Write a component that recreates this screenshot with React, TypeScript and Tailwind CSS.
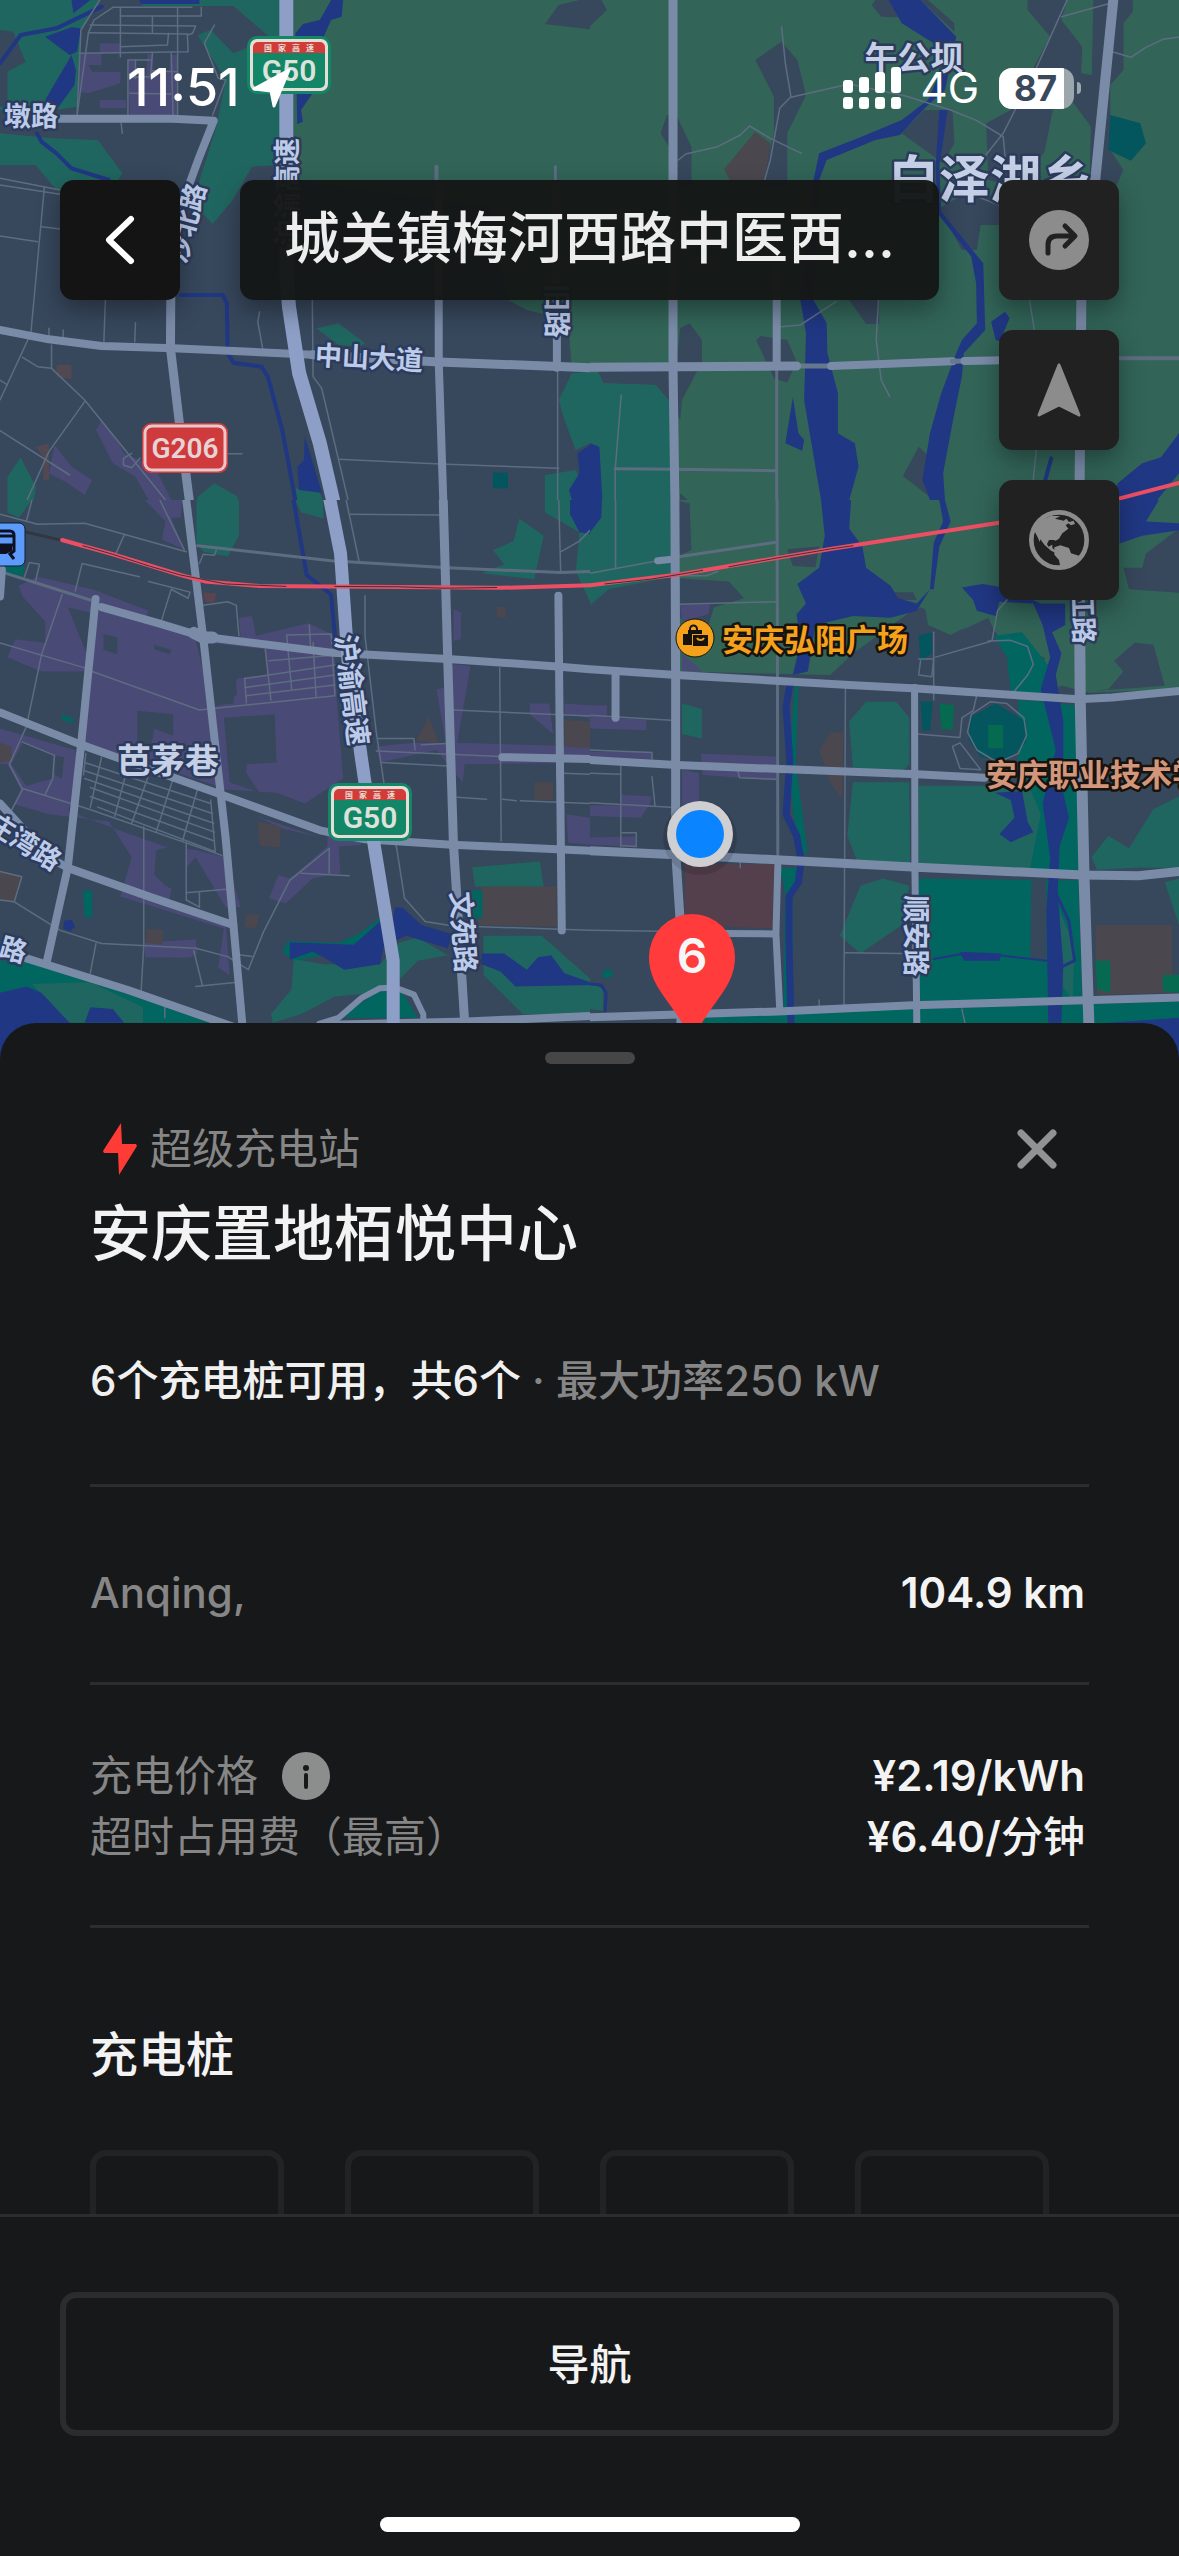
import React from "react";

type ShapeProps = { p: string; c: string };
type RoadProps = { p: string; w?: number; c?: string };

function Area({ p, c }: ShapeProps) {
  return <polygon points={p} fill={c} />;
}

function Road({ p, w = 1.5, c = "#5d6d81" }: RoadProps) {
  return (
    <polyline
      points={p}
      fill="none"
      stroke={c}
      strokeWidth={w}
      strokeLinecap="round"
      strokeLinejoin="round"
      vectorEffect="non-scaling-stroke"
    />
  );
}

const FIELD = "#326458";
const PARK = "#206660";
const TEAL = "#026660";
const POOL = "#03555e";
const WATER = "#203783";
const MALL = "#4a4a76";
const LAND = "#37475c";
const BROWN = "#4a474f";
const MAIN = "#7a8ba8";
const EXPRESS = "#8d9fc6";
const RAIL = "#ec4f64";

function TileNorthWest() {
  return (
    <svg x="0" y="0" width="590" height="500" viewBox="0 0 1568 1500" preserveAspectRatio="none">
      <Area c={LAND} p="0,0 1568,0 1568,1500 0,1500" />
      <Area c={FIELD} p="780,0 1568,0 1568,1115 1520,1115 1510,960 1400,930 1350,900 1300,620 780,540" />
      <Area c={LAND} p="1448,72 1485,15 1540,0 1568,0 1568,88" />
      <Area c={PARK} p="0,0 265,0 215,90 205,320 150,330 0,330" />
      <Area c={LAND} p="0,90 35,95 68,185 20,215 20,300 75,310 0,320" />
      <Area c={PARK} p="370,0 745,0 745,495 670,500 615,605 565,672 522,620 525,560 575,380 600,240 525,105 560,90 620,160 720,115 620,18 380,18" />
      <Area c={PARK} p="0,400 140,415 260,420 325,520 310,548 150,570 95,495 0,495" />
      <Area c={PARK} p="840,985 900,970 970,1030 955,1040 900,1035" />
      <Area c={PARK} p="1568,1115 1520,1120 1485,1200 1500,1260 1530,1350 1568,1330" />
      <Area c={PARK} p="1448,1425 1530,1410 1568,1500 1448,1500" />
      <Area c={PARK} p="20,1430 55,1372 95,1460 90,1500 20,1500" />
      <Area c={PARK} p="525,1490 570,1450 632,1490 632,1500 525,1500" />
      <Area c={PARK} p="785,1465 850,1478 858,1500 790,1500" />
      <Area c={POOL} p="1310,1418 1350,1418 1350,1465 1310,1465" />
      <Area c={WATER} p="190,0 240,0 195,40" />
      <Area c={WATER} p="370,0 530,0 530,12 375,12" />
      <Area c={WATER} p="120,110 190,82 215,85 205,155 185,165" />
      <Area c={WATER} p="190,165 202,210 198,255 150,330 120,300" />
      <Area c={WATER} p="880,0 912,0 908,50 880,60 860,110 870,140 855,240 800,330 805,365 790,372 785,100 805,72 850,60" />
      <Area c={WATER} p="810,1310 832,1390 855,1478 795,1470 790,1400 808,1380" />
      <Area c={WATER} p="1568,1335 1535,1360 1540,1420 1512,1470 1520,1500 1568,1500" />
      <Road c={WATER} w={4} p="0,190 55,105 150,85 270,20" />
      <Road c={WATER} w={4} p="98,400 110,425 150,460 190,505 290,540" />
      <Road c={WATER} w={4} p="480,885 592,885 603,910 605,1060 620,1088 695,1100 712,1130 750,1290 775,1440 785,1500" />
      <Area c={MALL} p="210,160 270,160 270,195 235,195 245,215 320,215 320,250 235,280 210,275" />
      <Area c={MALL} p="265,130 320,130 320,160 265,160" />
      <Area c={MALL} p="265,300 335,300 335,325 265,325" />
      <Area c={MALL} p="340,180 362,180 362,235 388,240 392,160 408,165 408,215 450,215 455,165 472,165 472,345 345,345" />
      <Area c={MALL} p="270,1262 300,1300 330,1360 380,1385 420,1420 455,1500 395,1500 360,1430 300,1390 255,1290" />
      <Area c={MALL} p="145,1335 190,1400 245,1440 225,1485 180,1450 130,1420" />
      <Area c="#524852" p="150,1095 190,1095 190,1138 150,1130" />
      <Area c="#524852" p="95,1340 130,1330 130,1440 115,1440 115,1370" />
      <Road p="510,22 300,22 250,60 235,98 205,345" />
      <Road p="265,0 215,90 205,345" />
      <Road p="320,22 320,170" />
      <Road p="535,22 535,48 320,48" />
      <Road p="240,75 520,78 512,100 498,105 500,155 210,160" />
      <Road p="235,98 498,102" />
      <Road p="405,50 405,98" />
      <Road p="472,22 472,345" />
      <Road p="320,140 445,135 448,100" />
      <Road p="340,345 340,180 400,180" />
      <Road p="360,180 360,235" />
      <Road p="405,160 400,230 345,232" />
      <Road p="405,212 470,215" />
      <Road p="455,160 460,345" />
      <Road p="345,280 455,282" />
      <Road p="570,75 543,130 580,235 600,240 565,345" />
      <Road p="322,370 325,400" />
      <Road p="0,535 160,570" />
      <Road p="0,555 160,583" />
      <Road p="118,560 100,780 82,1000 0,1200" />
      <Road p="110,680 160,687" />
      <Road p="0,708 100,725" />
      <Road p="280,900 276,1028" />
      <Road p="360,968 358,1025" />
      <Road p="130,985 130,1010" />
      <Road p="168,990 168,1012" />
      <Road p="137,1035 137,1105 225,1200 440,1500" />
      <Road p="60,1072 100,1100 137,1105" />
      <Road p="225,1205 130,1355 72,1500" />
      <Road p="0,1292 185,1425" />
      <Road p="0,1140 20,1155" />
      <Road p="372,1375 350,1403 328,1395 328,1375 350,1360" />
      <Road p="690,935 685,965 698,1045" />
      <Road p="605,1361 643,1361" />
      <Road p="830,900 832,1130 855,1165 925,1500" />
      <Road p="900,1378 1170,1392 1485,1405" />
      <Road p="1482,1110 1482,1500" />
      <Road p="1160,500 1160,560" w={4} />
      <Road p="1476,500 1476,560" w={3} />
      <Road c={MAIN} w={8} p="150,356 460,356 568,362 530,470 455,700" />
      <Road c={MAIN} w={8} p="0,990 130,1018 270,1038 460,1045 830,1064" />
      <Road c={MAIN} w={9} p="455,700 453,1045 480,1300 503,1500" />
      <Road c={MAIN} w={9} p="830,1064 1166,1086 1568,1103" />
      <Road c={MAIN} w={8} p="1166,560 1166,1086 1178,1500" />
      <Road c={MAIN} w={8} p="1480,560 1480,1103" />
      <Road c={EXPRESS} w={14} p="761,0 761,820 768,920 795,1120 850,1330 885,1500" />
    </svg>
  );
}

function TileNorthEast() {
  return (
    <svg x="590" y="0" width="589" height="500" viewBox="0 0 1568 1500" preserveAspectRatio="none">
      <Area c={FIELD} p="0,0 1568,0 1568,1500 0,1500" />
      <Area c={LAND} p="0,0 30,0 45,30 0,78" />
      <Area c={LAND} p="440,180 510,125 552,180 575,285 525,400 525,560 450,560 490,400 490,290" />
      <Area c={LAND} p="188,400 205,345 232,350 270,440 270,560 230,560 210,440" />
      <Area c={LAND} p="760,0 800,0 820,52 775,50 750,15" />
      <Area c={LAND} p="880,0 900,0 970,70 970,95" />
      <Area c={LAND} p="1165,0 1270,0 1255,60 1310,140 1308,220 1350,228 1350,405 1275,290 1232,330 1210,455 1140,560 1060,540 1055,370 1120,330 1225,110 1165,30" />
      <Area c={LAND} p="1340,0 1445,0 1445,35 1420,70 1420,210 1385,255 1385,450 1420,510 1400,560 1330,560" />
      <Area c={LAND} p="830,400 890,330 965,330 970,430 940,490" />
      <Area c={LAND} p="930,625 1030,560 1100,620 1100,675 1040,675 1030,750 990,750" />
      <Area c={LAND} p="690,900 770,900 770,972 735,972" />
      <Area c={LAND} p="442,1020 455,1008 525,1020 550,1085 525,1148 490,1135" />
      <Area c={LAND} p="240,985 265,970 298,1020 298,1085 245,1200 240,1260 215,1210 175,1155 35,1150 20,1110 230,1100" />
      <Area c={LAND} p="833,1428 875,1340 940,1410 940,1480 915,1500" />
      <Area c={LAND} p="240,1500 260,1500 240,1480" />
      <Area c={BROWN} p="357,508 440,395 480,430 465,545 375,545" />
      <Area c={POOL} p="1385,345 1465,370 1480,430 1440,482 1380,450" />
      <Area c={PARK} p="0,1120 22,1120 35,1150 175,1155 215,1210 215,1500 0,1500" />
      <Area c={WATER} p="795,0 830,70 915,130 945,180 900,300 830,360 720,412 610,460 595,540 560,900 575,1000 570,1200 615,1500 690,1500 715,1400 705,1330 660,1300 660,1180 632,1060 630,970 595,900 610,540 630,480 760,420 825,405 895,320 945,270 975,110 880,0" />
      <Area c={WATER} p="930,330 920,500 925,640 1015,770 1028,850 1030,970 990,1020 975,1060 935,1180 905,1300 885,1440 905,1500 945,1500 940,1420 970,1240 990,1130 995,1060 1052,990 1047,790 935,635 930,500 952,330" />
      <Area c={WATER} p="1068,965 1105,935 1117,955 1100,1000 1110,1030 1080,1020" />
      <Area c={WATER} p="540,1192 555,1300 570,1320 565,1352 520,1330" />
      <Area c={WATER} p="0,1330 25,1340 33,1500 0,1500" />
      <Area c={WATER} p="1405,1450 1470,1390 1520,1372 1568,1300 1568,1420 1510,1500 1390,1500" />
      <Road c={WATER} w={4} p="1228,1375 1212,1440" />
      <Road p="510,80 520,190 535,290 505,325 480,480 465,540" />
      <Road p="235,480 255,462 340,440 400,405 425,378 480,415 563,460" />
      <Road p="535,292 690,252 840,288 960,330 1030,362 1100,410 1105,470" />
      <Road p="1270,0 1190,200 1100,400 1050,470" />
      <Road p="1255,50 1385,10" />
      <Road p="1390,155 1440,172 1480,142 1525,118 1568,112" />
      <Road p="1030,590 1100,620" />
      <Road p="508,980 560,975 655,905" />
      <Road p="768,900 762,1020 775,1140 798,1190" />
      <Road p="497,1110 497,1500" w={3} />
      <Road p="83,1185 67,1410 67,1500" />
      <Road p="67,1406 222,1408 497,1412" w={3} />
      <Road p="1170,900 1183,990" />
      <Road p="1188,1350 1180,1440" />
      <Road p="1400,1075 1568,1075" w={4} />
      <Road c="#66788e" w={5} p="560,1098 640,1098" />
      <Road c={MAIN} w={9} p="0,1102 550,1098" />
      <Road c={MAIN} w={8} p="642,1098 965,1084" />
      <Road c="#66788e" w={5} p="965,1084 995,1083" />
      <Road c={MAIN} w={8} p="997,1083 1100,1081" />
      <Road c={MAIN} w={8} p="497,800 497,1098" />
      <Road c={MAIN} w={9} p="221,0 221,1100 226,1500" />
      <Road c={MAIN} w={10} p="1393,0 1345,540 1308,900 1303,1500" />
      <Road c={RAIL} w={4} p="1400,1498 1568,1449" />
    </svg>
  );
}

function TileSouthWest() {
  return (
    <svg x="0" y="500" width="590" height="560" viewBox="0 0 1568 1568" preserveAspectRatio="none">
      <Area c={LAND} p="0,0 1568,0 1568,1568 0,1568" />
      <Area c={PARK} p="20,0 85,0 50,50 20,35" />
      <Area c={PARK} p="522,0 635,0 635,100 605,158 540,145 522,120" />
      <Area c={PARK} p="785,0 858,0 860,52 800,35" />
      <Area c={PARK} p="1380,52 1445,100 1420,222 1280,205 1340,180 1310,140 1365,115" />
      <Area c={PARK} p="1448,0 1568,0 1568,285 1530,200 1540,90 1448,35" />
      <Area c={WATER} p="1515,0 1568,0 1568,95 1540,90 1515,40" />
      <Area c={TEAL} p="0,180 65,175 62,212 0,200" />
      <Area c={MALL} p="385,0 485,0 480,50 455,50 490,140 430,110 440,60" />
      <Area c={MALL} p="50,240 100,215 245,250 395,310 380,350 180,300 250,480 110,480 20,440 40,390 120,400 120,340 60,270" />
      <Area c={MALL} p="268,300 515,372 545,500 570,700 575,800 225,680 255,330" />
      <Area c={MALL} p="545,390 640,385 635,330 670,325 680,380 820,345 890,380 890,480 895,560 912,780 810,850 735,820 590,810 570,580 630,545 625,500" />
      <Area c={LAND} p="595,610 730,600 735,735 655,740 655,765 690,820 610,790" />
      <Area c={LAND} p="555,400 705,418 710,490 630,500 620,570 570,575" />
      <Area c={LAND} p="275,375 312,385 312,432 275,420" />
      <Area c={LAND} p="365,590 460,600 460,660 410,640 400,700 365,690" />
      <Area c={LAND} p="410,405 455,420 450,432 410,418" />
      <Area c={MALL} p="0,640 200,700 215,790 180,870 330,930 440,970 520,980 600,1000 640,1140 600,1140 520,1000 460,1070 450,1120 600,1180 610,1330 580,1310 595,1200 320,1110 350,1000 290,900 130,880 0,840" />
      <Area c={LAND} p="0,740 20,740 55,810 20,890 0,860" />
      <Area c={LAND} p="60,680 140,715 140,780 70,800 30,740" />
      <Area c={LAND} p="145,715 170,720 165,780 145,770" />
      <Area c={LAND} p="225,710 560,830 590,990 345,900 225,780" />
      <Area c={LAND} p="415,980 495,960 495,1110 440,1080 410,1050" />
      <Area c={MALL} p="740,1050 770,1060 870,970 870,940 960,950 960,965 900,970 905,1045 830,1060 760,1130 715,1115" />
      <Area c={MALL} p="680,885 850,945 750,920" />
      <Area c={MALL} p="385,1240 520,1230 525,1270 505,1282 385,1280" />
      <Area c={MALL} p="1205,305 1225,315 1225,390 1205,395" />
      <Area c={MALL} p="1205,460 1250,465 1235,560 1215,680 1568,690 1568,735 1235,740 1230,790 1205,760 1160,700 1010,735 1000,690 1100,680 1185,680 1160,530 1185,525" />
      <Area c={MALL} p="1408,570 1460,570 1470,655 1430,620 1408,600" />
      <Area c={MALL} p="1500,570 1568,575 1568,610 1500,600" />
      <Area c={MALL} p="1505,880 1568,890 1568,965 1510,960" />
      <Area c={BROWN} p="1500,615 1568,620 1568,695 1500,690" />
      <Area c={BROWN} p="1140,605 1165,680 1105,675" />
      <Area c={BROWN} p="1420,790 1470,790 1470,840 1420,840" />
      <Area c={BROWN} p="685,900 745,915 745,972 690,968" />
      <Area c={BROWN} p="390,1200 435,1205 430,1245 385,1240" />
      <Area c={BROWN} p="0,1040 60,1055 35,1130 0,1120" />
      <Area c={BROWN} p="0,680 30,690 30,730 0,735" />
      <Area c={BROWN} p="655,1160 690,1160 680,1200 650,1195" />
      <Area c="#5a4450" p="540,258 575,262 570,288 545,285" />
      <Area c={BROWN} p="1320,298 1345,302 1345,330 1320,328" />
      <Area c={BROWN} p="1280,1082 1480,1082 1480,1195 1270,1190" />
      <Area c={PARK} p="1255,1028 1435,1012 1445,1082 1262,1082" />
      <Area c={TEAL} p="1250,1092 1282,1095 1282,1170 1255,1175" />
      <Area c={TEAL} p="220,1092 245,1095 245,1170 225,1168" />
      <Area c={TEAL} p="165,600 195,612 195,625 165,615" />
      <Area c={WATER} p="170,1178 190,1175 200,1195 185,1208 168,1200" />
      <Area c={PARK} p="780,1285 860,1300 1010,1300 1060,1240 1110,1225 1190,1275 1110,1290 1060,1345 1000,1380 890,1390 800,1440 725,1464 720,1440 775,1370" />
      <Area c={TEAL} p="750,1265 765,1235 900,1240 960,1210 1010,1170 1000,1250 780,1290" />
      <Area c={PARK} p="1285,1220 1440,1220 1568,1340 1568,1440 1390,1440 1285,1330" />
      <Area c={TEAL} p="900,1450 1010,1375 1065,1370 1110,1450" />
      <Area c={WATER} p="770,1238 940,1245 1010,1180 1045,1170 1050,1140 1070,1142 1120,1190 1200,1215 1190,1255 1080,1220 1020,1250 1010,1300 915,1315 860,1280 830,1265 770,1287" />
      <Area c={WATER} p="1280,1270 1340,1270 1400,1315 1430,1280 1465,1275 1500,1325 1568,1350 1568,1358 1370,1362 1330,1320 1280,1300" />
      <Area c={TEAL} p="0,1290 70,1292 300,1370 560,1464 0,1464" />
      <Area c={PARK} p="85,1355 240,1350 380,1420 380,1464 180,1464" />
      <Area c={WATER} p="0,1380 70,1362 110,1380 185,1464 140,1568 0,1568" />
      <Area c={WATER} p="225,1464 240,1420 300,1425 330,1464" />
      <Road c={WATER} w={4} p="780,0 815,210 880,265 890,380" />
      <Road p="0,40 100,68 225,65 495,145" />
      <Road p="85,0 70,60" />
      <Road p="330,98 308,150" />
      <Road p="425,0 490,140" />
      <Road p="525,128 880,170 1190,190 1490,203 1568,200" w={3} />
      <Road p="920,0 955,175" />
      <Road p="930,40 1168,42" />
      <Road p="1485,0 1490,200" />
      <Road p="1490,145 1540,115 1568,85" />
      <Road p="575,140 570,155 540,152 530,178" />
      <Road p="0,200 240,280" w={3} />
      <Road p="65,215 78,175 105,180 95,225" />
      <Road p="200,255 218,178 370,215" />
      <Road p="430,335 455,250 500,275 505,258 395,228" />
      <Road p="540,295 605,285 628,295 635,380" />
      <Road p="165,265 110,435 70,635 25,740 60,810 20,890" />
      <Road p="0,400 225,470" />
      <Road p="245,480 530,588 890,548" />
      <Road p="60,678 145,715 140,780 120,825" />
      <Road p="60,808 235,865 590,995" />
      <Road p="705,418 720,560" />
      <Road p="762,380 775,530" />
      <Road p="832,400 840,550" />
      <Road p="762,378 880,375 890,545" />
      <Road p="822,350 825,410" />
      <Road p="650,500 890,462" />
      <Road p="652,525 890,490" />
      <Road p="655,548 890,518" />
      <Road p="715,450 885,435" />
      <Road p="650,500 655,568" />
      <Road p="225,735 560,850" />
      <Road p="225,758 565,878" />
      <Road p="225,780 568,905" />
      <Road p="240,805 570,930" />
      <Road p="240,830 570,955" />
      <Road p="260,860 572,985" />
      <Road p="228,710 222,770" />
      <Road p="270,720 240,860" />
      <Road p="340,745 305,885" />
      <Road p="400,755 350,905" />
      <Road p="460,780 415,930" />
      <Road p="525,810 485,955" />
      <Road p="560,840 572,985" />
      <Road p="382,915 382,1250 375,1375" />
      <Road p="495,960 495,1120 530,1140" />
      <Road p="530,1100 530,1140" />
      <Road p="495,1100 600,1090" />
      <Road p="0,1040 58,1055 38,1125 0,1120" />
      <Road p="38,1125 160,1205 270,1242 520,1255 610,1280" />
      <Road p="255,1242 240,1325" />
      <Road p="515,1262 538,1360" />
      <Road p="520,1362 630,1350" />
      <Road p="610,1282 660,1315 700,1210 770,1065 875,975 875,1045" />
      <Road p="800,1045 928,1052" />
      <Road p="625,1272 670,1278" />
      <Road p="970,268 970,380 1000,650 1020,790 1055,980 1075,1115 1130,1180 1200,1192 1568,1205" />
      <Road p="1005,668 1100,668 1103,700" />
      <Road p="1000,703 1330,718" />
      <Road p="1015,735 1190,745" />
      <Road p="1120,685 1185,682" />
      <Road p="1328,470 1332,955" />
      <Road p="1205,588 1568,605" />
      <Road p="1215,832 1293,838" />
      <Road p="1335,838 1372,842" />
      <Road p="1383,842 1568,850" />
      <Road p="1495,765 1568,768" />
      <Road p="438,1420 438,1450" />
      <Road c={MAIN} w={8} p="254,277 215,690 180,1030 125,1290" />
      <Road c={MAIN} w={8} p="0,595 215,685 580,822 850,925 970,950 1200,965 1568,982" />
      <Road c={MAIN} w={8} p="270,300 420,345 540,383 885,428 1190,445 1480,466 1568,474" />
      <Road c={MAIN} w={12} p="515,372 540,385 565,385" />
      <Road c={MAIN} w={8} p="495,0 540,385 600,950 645,1480" />
      <Road c={MAIN} w={8} p="0,850 130,1000 180,1030 400,1112 620,1190" />
      <Road c={MAIN} w={8} p="0,1262 60,1280 340,1372 620,1475" />
      <Road c={MAIN} w={9} p="1178,0 1190,450 1205,960 1235,1464" />
      <Road c={MAIN} w={8} p="1484,268 1488,720 1493,1205" />
      <Road c={MAIN} w={8} p="1335,720 1568,725" />
      <Road c={MAIN} w={6} p="850,1466 900,1450 960,1395 1010,1367 1050,1365 1100,1385 1125,1440 1125,1464" />
      <Road c={MAIN} w={8} p="850,1470 1240,1460 1568,1445" />
      <Road c={MAIN} w={8} p="5,195 0,270" />
      <Road c={EXPRESS} w={13} p="875,-10 905,150 925,450 960,720 995,970 1045,1290 1045,1480" />
      <Road c="#33363f" w={3} p="70,90 165,113" />
      <Road c={RAIL} w={4} p="165,112 300,152 480,210 545,228 690,241 1330,246 1568,239" />
      <Road c="#33363f" w={1} p="220,128 300,152 400,186 480,210 600,235 760,242" />
      <Road c="#33363f" w={1} p="890,242 1060,243 1180,247 1320,245" />
    </svg>
  );
}

function TileSouthEast() {
  return (
    <svg x="590" y="500" width="589" height="560" viewBox="0 0 1568 1568" preserveAspectRatio="none">
      <Area c={LAND} p="0,0 1568,0 1568,1568 0,1568" />
      <Area c={FIELD} p="225,0 1568,0 1568,530 1330,540 1255,520 1210,545 1120,420 1080,370 1000,370 960,340 880,300 640,490 225,480" />
      <Area c={PARK} p="0,0 220,0 220,215 50,250 0,295" />
      <Area c={LAND} p="240,220 370,228 410,275 330,300 310,370 240,330" />
      <Area c={MALL} p="240,295 320,292 315,320 245,340" />
      <Area c={MALL} p="245,430 300,480 245,480" />
      <Area c={LAND} p="225,0 265,10 270,140 240,155" />
      <Area c={LAND} p="525,138 610,130 600,188 540,185" />
      <Area c={LAND} p="640,490 700,430 870,300 880,335 940,375 1000,360 1060,330 1100,420 1210,440 1210,545" />
      <Area c={LAND} p="805,258 860,258 870,280 820,280" />
      <Area c={FIELD} p="885,260 1000,240 1050,330 960,378 900,350" />
      <Area c={LAND} p="1420,190 1470,190 1480,150 1568,80 1568,260 1435,250" />
      <Area c={LAND} p="1395,450 1450,400 1500,405 1530,520 1340,535 1380,530 1420,480" />
      <Area c={TEAL} p="1075,380 1150,370 1225,470 1210,545 1120,535 1110,440" />
      <Area c={POOL} p="875,380 910,370 910,430 880,450" />
      <Area c={PARK} p="245,570 298,585 298,668 245,655" />
      <Area c={PARK} p="690,620 735,565 815,565 850,610 850,740 810,780 700,750" />
      <Area c={PARK} p="700,790 850,790 852,1025 720,1035 685,940" />
      <Area c={PARK} p="720,1080 780,1060 850,1080 830,1190 720,1270 665,1220" />
      <Area c={PARK} p="875,800 1235,800 1210,1035 875,1020" />
      <Area c={TEAL} p="1140,560 1210,565 1290,575 1310,1045 1170,1040 1200,880 1140,730" />
      <Area c={TEAL} p="875,1060 1300,1065 1310,1400 870,1410" />
      <Area c={LAND} p="1175,1065 1215,1065 1215,1290 1172,1280" />
      <Area c={PARK} p="1250,1150 1290,1250 1285,1400 1250,1350" />
      <Area c={TEAL} p="300,1450 860,1425 1568,1405 1568,1568 300,1568" />
      <Area c={PARK} p="1335,1000 1380,940 1435,975 1500,865 1568,830 1568,1030 1450,1030 1350,1035" />
      <Area c={PARK} p="1568,1060 1530,1070 1568,1190" />
      <Area c={BROWN} p="1345,1190 1550,1190 1550,1380 1350,1385" />
      <Area c="#066a50" p="1345,1290 1385,1290 1385,1380 1350,1370" />
      <Area c="#066a50" p="1525,1330 1568,1330 1568,1380 1525,1375" />
      <Area c="#543f4d" p="252,1020 490,1020 485,1200 252,1190" />
      <Area c={BROWN} p="610,700 640,650 675,650 672,840 640,790" />
      <Area c={MALL} p="0,575 45,575 45,610 150,615 150,645 0,640" />
      <Area c={MALL} p="0,705 165,705 165,725 0,720" />
      <Area c={MALL} p="295,710 495,718 495,785 300,770" />
      <Area c={MALL} p="245,755 290,765 290,850 245,880" />
      <Area c={MALL} p="0,855 80,855 85,825 165,830 160,850 135,890 0,885" />
      <Area c={MALL} p="0,945 120,942 120,970 0,965" />
      <Area c={POOL} p="1010,610 1080,570 1160,620 1160,680 1110,730 1040,720 1008,670" />
      <Area c="#066a50" p="1060,630 1100,630 1100,695 1060,695" />
      <Area c={POOL} p="880,565 912,565 905,645 885,645" />
      <Area c="#066a50" p="930,570 970,575 965,645 935,640" />
      <Area c={TEAL} p="505,1030 560,1030 540,1080 540,1420 515,1420 520,1100" />
      <Area c={TEAL} p="545,520 555,520 548,740 580,990 560,990 540,870 530,740" />
      <Area c={PARK} p="0,1350 35,1370 35,1430 0,1425" />
      <Area c={TEAL} p="35,1315 60,1315 60,1335 35,1340" />
      <Area c={WATER} p="0,0 32,0 30,50 0,90" />
      <Area c={WATER} p="615,0 695,0 690,80 725,130 735,190 800,240 820,275 870,290 905,250 870,310 800,330 700,325 600,350 580,480 540,490 560,400 550,320 575,290 552,235 610,190 625,100" />
      <Area c={WATER} p="905,250 915,120 940,60 930,0 945,0 960,60 930,130 915,250" />
      <Area c={WATER} p="990,245 1045,235 1100,245 1200,290 1265,290 1265,350 1230,370 1255,430 1240,490 1260,620 1260,820 1275,890 1250,970 1245,1100 1260,1300 1255,1464 1220,1464 1215,1150 1225,1000 1205,850 1240,700 1200,530 1225,440 1205,350 1180,290 1090,285 1080,325 1030,310 1020,280" />
      <Area c={WATER} p="1410,0 1515,0 1480,60 1568,65 1568,85 1470,100 1410,122" />
      <Area c={WATER} p="1078,820 1150,815 1165,900 1180,930 1120,958 1090,935 1130,890 1120,840" />
      <Area c={WATER} p="985,1265 1095,1270 1090,1290 995,1290" />
      <Area c={WATER} p="1380,1464 1568,1450 1568,1568 1400,1568" />
      <Road c={WATER} w={2} p="915,1285 985,1272 1090,1275 1215,1290" />
      <Road c={WATER} w={3} p="1240,1100 1275,1180 1290,1290 1250,1310" />
      <Road c={WATER} w={7} p="533,510 522,580 532,730 522,880 550,940 562,1010 555,1070 530,1110 530,1250 535,1464" />
      <Road c={WATER} w={3} p="0,1355 30,1358 43,1380 40,1430" />
      <Road p="68,0 68,190" />
      <Road p="0,205 180,170" />
      <Road p="240,158 495,118" w={3} />
      <Road p="240,212 310,212 340,200" />
      <Road p="240,292 495,285" />
      <Road p="498,0 500,1000" w={3} />
      <Road p="680,525 676,1415" />
      <Road p="920,440 1070,395 1085,310 1110,280" />
      <Road p="1060,395 1120,393 1165,410 1180,460 1165,490 1130,535" />
      <Road p="915,370 915,560" />
      <Road p="875,445 915,445 910,495 875,490 880,450" />
      <Road p="1030,545 1020,590 990,610 985,665 870,655" />
      <Road p="1065,565 1110,570 1155,610 1162,660 1140,710 1085,735 1030,700 1005,650 1015,600 1065,565" />
      <Road p="965,690 985,680 1040,755 985,752 965,690" />
      <Road p="0,603 215,617" />
      <Road p="165,725 165,707 0,700" />
      <Road p="82,745 82,970" />
      <Road p="165,775 173,855" />
      <Road p="0,765 82,768" />
      <Road p="0,848 215,860" />
      <Road p="85,932 123,932 123,970 85,968" />
      <Road p="393,755 398,778 495,782" />
      <Road p="0,1205 240,1208" />
      <Road p="680,1268 830,1270" />
      <Road p="400,1015 400,1030" />
      <Road p="610,1400 610,1418" />
      <Road p="990,1425 998,1464" />
      <Road c={MAIN} w={8} p="0,474 230,490 690,518 870,528 1300,558 1390,553 1568,535" />
      <Road c={MAIN} w={8} p="68,485 68,610" />
      <Road c={MAIN} w={8} p="0,728 230,742 870,768 1050,778" />
      <Road c={MAIN} w={9} p="0,982 230,993 870,1028 1310,1050 1460,1052 1568,1040" />
      <Road c={MAIN} w={9} p="226,-10 228,500 228,985 242,1210 242,1464" />
      <Road c={MAIN} w={7} p="180,170 225,165" />
      <Road c={MAIN} w={7} p="864,525 865,1030 870,1464" />
      <Road c={MAIN} w={7} p="500,1025 495,1215 505,1425" />
      <Road c={MAIN} w={7} p="245,1213 490,1215" />
      <Road c={MAIN} w={8} p="0,1448 500,1432 860,1415 1568,1393" />
      <Road c={MAIN} w={11} p="1303,250 1305,560 1315,1050 1328,1464" />
      <Road c={RAIL} w={4} p="0,239 240,208 640,137 1110,60" />
      <Road c="#33363f" w={1} p="40,235 160,222 240,208 300,197" />
      <Road c="#33363f" w={1} p="370,187 500,162 640,137 700,128" />
    </svg>
  );
}

function HighwayShield({ x, y }: { x: number; y: number }) {
  return (
    <g transform={`translate(${x} ${y})`}>
      <rect width="84" height="58" rx="10" fill="#138667" />
      <rect x="3" y="3" width="78" height="52" rx="7" fill="#e4ded6" />
      <path d="M6 17V11a5 5 0 0 1 5-5h62a5 5 0 0 1 5 5v6z" fill="#d13c38" />
      <path d="M6 17h72v30a5 5 0 0 1-5 5H11a5 5 0 0 1-5-5z" fill="#138667" />
      <g fontSize="8" fontWeight="700" fill="#e4ded6" textAnchor="middle">
        <text x="21" y="15">国</text>
        <text x="35" y="15">家</text>
        <text x="49" y="15">高</text>
        <text x="63" y="15">速</text>
      </g>
      <text x="42" y="45" textAnchor="middle" fontSize="30" fontWeight="600" fill="#dde2da" className="font-['Roboto']">G50</text>
    </g>
  );
}

type LabelProps = { x: number; y: number; size?: number; turn?: number; place?: boolean; anchor?: "start" | "middle" | "end"; children: string };

function RoadLabel({ x, y, size = 27, turn = 0, place = false, anchor = "middle", children }: LabelProps) {
  return (
    <text
      transform={`translate(${x} ${y}) rotate(${turn})`}
      textAnchor={anchor}
      dominantBaseline="central"
      fontSize={size}
      fontWeight={place ? 700 : 600}
      fill={place ? "#c5d0e6" : "#bdcbea"}
      stroke="#2c3b5c"
      strokeWidth="5"
      strokeLinejoin="round"
      paintOrder="stroke"
    >
      {children}
    </text>
  );
}

function MapView() {
  return (
    <svg className="block w-full" viewBox="0 0 1179 1060" role="img" aria-label="地图">
      <TileNorthWest />
      <TileNorthEast />
      <TileSouthWest />
      <TileSouthEast />

      <RoadLabel x={31} y={116}>墩路</RoadLabel>
      <RoadLabel x={197} y={184} turn={-75} anchor="end">沙北路</RoadLabel>
      <RoadLabel x={287} y={138} turn={-90} anchor="end">沪渝高速</RoadLabel>
      <RoadLabel x={369} y={358} turn={3}>中山大道</RoadLabel>
      <RoadLabel x={556} y={338} turn={90} anchor="end">旧路</RoadLabel>
      <RoadLabel x={352} y={690} turn={83} size={28}>沪渝高速</RoadLabel>
      <RoadLabel x={24} y={842} turn={32}>庄湾路</RoadLabel>
      <RoadLabel x={13} y={950} turn={16}>路</RoadLabel>
      <RoadLabel x={463} y={932} turn={86}>文苑路</RoadLabel>
      <RoadLabel x={915} y={936} turn={90}>顺安路</RoadLabel>
      <RoadLabel x={1084} y={644} turn={88} anchor="end">滨江路</RoadLabel>
      <RoadLabel x={168} y={760} size={34} place>芭茅巷</RoadLabel>
      <RoadLabel x={914} y={58} size={33} place>午公坝</RoadLabel>
      <RoadLabel x={990} y={179} size={51} place>白泽湖乡</RoadLabel>

      <HighwayShield x={247} y={36} />
      <HighwayShield x={328} y={783} />
      <g transform="translate(142 423)">
        <rect width="86" height="50" rx="9" fill="#cf3b3c" />
        <rect x="3" y="3" width="80" height="44" rx="7" fill="none" stroke="#e6c9cc" strokeWidth="3" />
        <text x="43" y="35" textAnchor="middle" fontSize="28" fontWeight="600" fill="#e6d3d5" className="font-['Roboto']">G206</text>
      </g>

      <g>
        <rect x="-20" y="523" width="45" height="43" rx="6" fill="#5c9afc" stroke="#101b38" strokeWidth="1" />
        <path d="M-4 531h14a4 4 0 0 1 4 4v16l-4 3 4 5M-4 536h17M-4 545h18" fill="none" stroke="#0c1020" strokeWidth="3" />
        <path d="M-4 545h16v6l-6 3H-4z" fill="#0c1020" />
      </g>

      <g>
        <circle cx="695" cy="638" r="19" fill="#f5a11c" stroke="#1a1408" strokeWidth="1" />
        <path d="M683 634h9v11h-9zM693 635h15v11h-15zM688 630h14v4h-14z" fill="#16130c" />
        <path d="M690 631v-2a3 3 0 0 1 7 0v2" fill="none" stroke="#16130c" strokeWidth="2" />
        <path d="M697 638a4 4 0 0 0 7 0" fill="none" stroke="#f5a11c" strokeWidth="2" />
      </g>
      <g fontSize="31" fontWeight="600" stroke="#17130f" strokeWidth="5" strokeLinejoin="round" paintOrder="stroke" dominantBaseline="central">
        <text x="722" y="639" fill="#f5a11c">安庆弘阳广场</text>
        <text x="986" y="774" fill="#d3967a">安庆职业技术学院</text>
      </g>

      <g>
        <circle cx="700" cy="838" r="37" fill="#000" opacity="0.12" />
        <circle cx="700" cy="834" r="33" fill="#cfcfd1" />
        <circle cx="700" cy="834" r="24" fill="#0a84ff" />
      </g>
      <g>
        <path d="M649 957a43 43 0 1 1 86 0c0 28-20 42-36 71q-7 14-14 0c-16-29-36-43-36-71z" fill="#ff3b3b" />
        <text x="692" y="973" textAnchor="middle" fontSize="48" fontWeight="600" fill="#f6f6f6">6</text>
      </g>
    </svg>
  );
}

function StatusBar() {
  return (
    <div className="flex h-[120px] items-end justify-between pr-[98px] pl-[127px] text-white">
      <div className="flex h-16 items-center gap-3">
        <span className="text-[52px] leading-none font-medium">11:51</span>
        <svg className="size-10" viewBox="0 0 40 40" fill="#fff" stroke="#fff" strokeWidth="3" strokeLinejoin="round" aria-hidden="true">
          <path d="M37 2 2 21l17 2 3 15z" />
        </svg>
      </div>
      <div className="flex h-16 items-center gap-5">
        <svg className="h-[47px] w-[58px]" viewBox="0 0 58 47" fill="#fff" aria-hidden="true">
          <rect x="0" y="15" width="10" height="13" rx="3" />
          <rect x="16" y="12" width="10" height="16" rx="3" />
          <rect x="32" y="7" width="10" height="21" rx="3" />
          <rect x="48" y="2" width="10" height="26" rx="3" />
          <rect x="0" y="32" width="10" height="12" rx="3" />
          <rect x="16" y="32" width="10" height="12" rx="3" />
          <rect x="32" y="32" width="10" height="12" rx="3" />
          <rect x="48" y="32" width="10" height="12" rx="3" />
        </svg>
        <span className="text-[42px] leading-none">4G</span>
        <div className="flex items-center gap-[3px]">
          <div className="flex h-[41px] w-[75px] items-center overflow-hidden rounded-[13px] bg-[#9ca6ad]">
            <span className="flex h-full w-[65px] items-center justify-center bg-white pl-2 text-[35px] leading-none font-bold text-[#3a485b]">87</span>
          </div>
          <span className="h-3 w-1 rounded-r-full bg-[#9ca6ad]" />
        </div>
      </div>
    </div>
  );
}

function MapControls() {
  const button = "flex size-[120px] items-center justify-center rounded-[14px] bg-[#212121] shadow-[0_10px_24px_rgba(0,0,0,0.35)]";
  return (
    <div className="flex items-start gap-[60px] px-[60px] pt-[60px]">
      <button type="button" aria-label="返回" className="flex size-[120px] shrink-0 items-center justify-center rounded-[14px] bg-[#141414] shadow-[0_10px_24px_rgba(0,0,0,0.35)]">
        <svg className="h-14 w-8" viewBox="0 0 32 56" fill="none" stroke="#fff" strokeWidth="6" strokeLinecap="round" strokeLinejoin="round" aria-hidden="true">
          <path d="M27 7 5 28l22 21" />
        </svg>
      </button>
      <button type="button" className="h-[120px] min-w-0 flex-1 truncate rounded-[14px] bg-[#151716]/97 pb-1 text-center text-[56px] font-medium text-[#ededed] shadow-[0_10px_24px_rgba(0,0,0,0.35)]">
        城关镇梅河西路中医西…
      </button>
      <div className="flex shrink-0 flex-col gap-[30px]">
        <button type="button" aria-label="路线" className={button}>
          <svg className="size-[60px]" viewBox="0 0 60 60" aria-hidden="true">
            <circle cx="30" cy="30" r="30" fill="#8c8c8c" />
            <path d="M19 43v-8q0-9 9-9h17M36 16l10 10-10 10" fill="none" stroke="#212121" strokeWidth="5" strokeLinecap="round" strokeLinejoin="round" />
          </svg>
        </button>
        <button type="button" aria-label="定位" className={button}>
          <svg className="size-[60px]" viewBox="0 0 60 60" fill="#8c8c8c" stroke="#8c8c8c" strokeWidth="3" strokeLinejoin="round" aria-hidden="true">
            <path d="M30 5 10 55l20-10 20 10z" />
          </svg>
        </button>
        <button type="button" aria-label="卫星图" className={button}>
          <svg className="size-[60px]" viewBox="0 0 180 180" fill="#8c8c8c" aria-hidden="true">
            <circle cx="90" cy="90" r="83" fill="none" stroke="#8c8c8c" strokeWidth="14" />
            <path d="M16 62 34 32 64 18l30 0-16 8 26 6 8-6 8 10 14-4 4 10-12 4-8-6-8 6 8 10-18 14-10 16-10 6-6-2-14 0-6 12 4 8 12-6 0 10 10 8 2 8-16-8-20-18-12-16-2 8-6-14z" />
            <path d="M76 112l18-6 26 8 6 16 26 8-16 22-24 12-18 0-4-22-14-16z" />
          </svg>
        </button>
      </div>
    </div>
  );
}

function StationSheet() {
  return (
    <main className="relative -mt-[37px] flex-1 rounded-t-[36px] bg-[#17181a] px-[90px] pt-[29px]">
      <div className="mx-auto h-3 w-[90px] rounded-md bg-[#464647]" />
      <header className="mt-[55px]">
        <div className="flex h-[60px] items-center justify-between">
          <p className="flex items-center gap-3 pl-3 text-[42px] leading-[60px] text-[#868686]">
            <svg className="h-[52px] w-9" viewBox="0 0 36 52" fill="#ff3b36" aria-hidden="true">
              <path d="M19 0 1 28l1 2h14l1 22 18-29-1-2H20z" />
            </svg>
            超级充电站
          </p>
          <button type="button" aria-label="关闭" className="mr-8">
            <svg className="size-10" viewBox="0 0 40 40" stroke="#929292" strokeWidth="7" strokeLinecap="round" aria-hidden="true">
              <path d="M4 4l32 32M36 4 4 36" />
            </svg>
          </button>
        </div>
        <h1 className="mt-[15px] text-[61px] leading-[80px] font-medium text-[#f3f3f3]">安庆置地栢悦中心</h1>
      </header>
      <p className="mt-[77px] border-b-[3px] border-[#2c2d2e] pb-[73px] text-[42px] leading-[60px] font-medium text-[#f0f0f0]">
        6个充电桩可用，共6个<span className="text-[#868686]"> · 最大功率250 kW</span>
      </p>
      <div className="flex justify-between border-b-[3px] border-[#2c2d2e] pt-[76px] pr-1 pb-[59px] text-[42px] leading-[60px]">
        <span className="font-medium text-[#868686]">Anqing,</span>
        <span className="font-semibold text-[#f3f3f3]">104.9 km</span>
      </div>
      <dl className="border-b-[3px] border-[#2c2d2e] pt-[60px] pr-1 pb-[58px] text-[42px] leading-[61px]">
        <div className="flex justify-between">
          <dt className="flex items-center gap-6 text-[#868686]">
            充电价格
            <button type="button" aria-label="价格说明">
              <svg className="size-12" viewBox="0 0 48 48" aria-hidden="true">
                <circle cx="24" cy="24" r="24" fill="#8c8d8d" />
                <circle cx="24" cy="16" r="3" fill="#17181a" />
                <path d="M24 23v12" stroke="#17181a" strokeWidth="4" strokeLinecap="round" />
              </svg>
            </button>
          </dt>
          <dd className="font-semibold text-[#f3f3f3]">¥2.19/kWh</dd>
        </div>
        <div className="flex justify-between">
          <dt className="text-[#868686]">超时占用费（最高）</dt>
          <dd className="font-semibold text-[#f3f3f3]">¥6.40/<span className="font-medium">分钟</span></dd>
        </div>
      </dl>
      <section>
        <h2 className="pt-[97px] text-[48px] leading-[60px] font-medium text-[#f3f3f3]">充电桩</h2>
        <ul className="mt-[65px] flex h-16 gap-[61px] overflow-hidden">
          {["1A", "1B", "1C", "1D"].map((stall) => (
            <li key={stall} className="h-[194px] w-[194px] shrink-0 rounded-2xl border-[6px] border-[#222325]" />
          ))}
        </ul>
      </section>
    </main>
  );
}

export default function App() {
  return (
    <div className="flex min-h-screen flex-col bg-[#17181a] font-['Inter','Noto_Sans_CJK_SC',sans-serif]">
      <div className="relative overflow-hidden bg-[#37475c]">
        <MapView />
        <div className="absolute inset-x-0 top-0">
          <StatusBar />
          <MapControls />
        </div>
      </div>
      <StationSheet />
      <footer className="border-t-[3px] border-[#2c2d2e] bg-[#17181a] px-[60px] pt-[75px] pb-6">
        <button type="button" className="h-36 w-full rounded-2xl border-[6px] border-[#2b2c2d] text-[42px] font-medium text-[#f3f3f3]">导航</button>
        <div className="mx-auto mt-[81px] h-[15px] w-[420px] max-w-full rounded-full bg-white" />
      </footer>
    </div>
  );
}
